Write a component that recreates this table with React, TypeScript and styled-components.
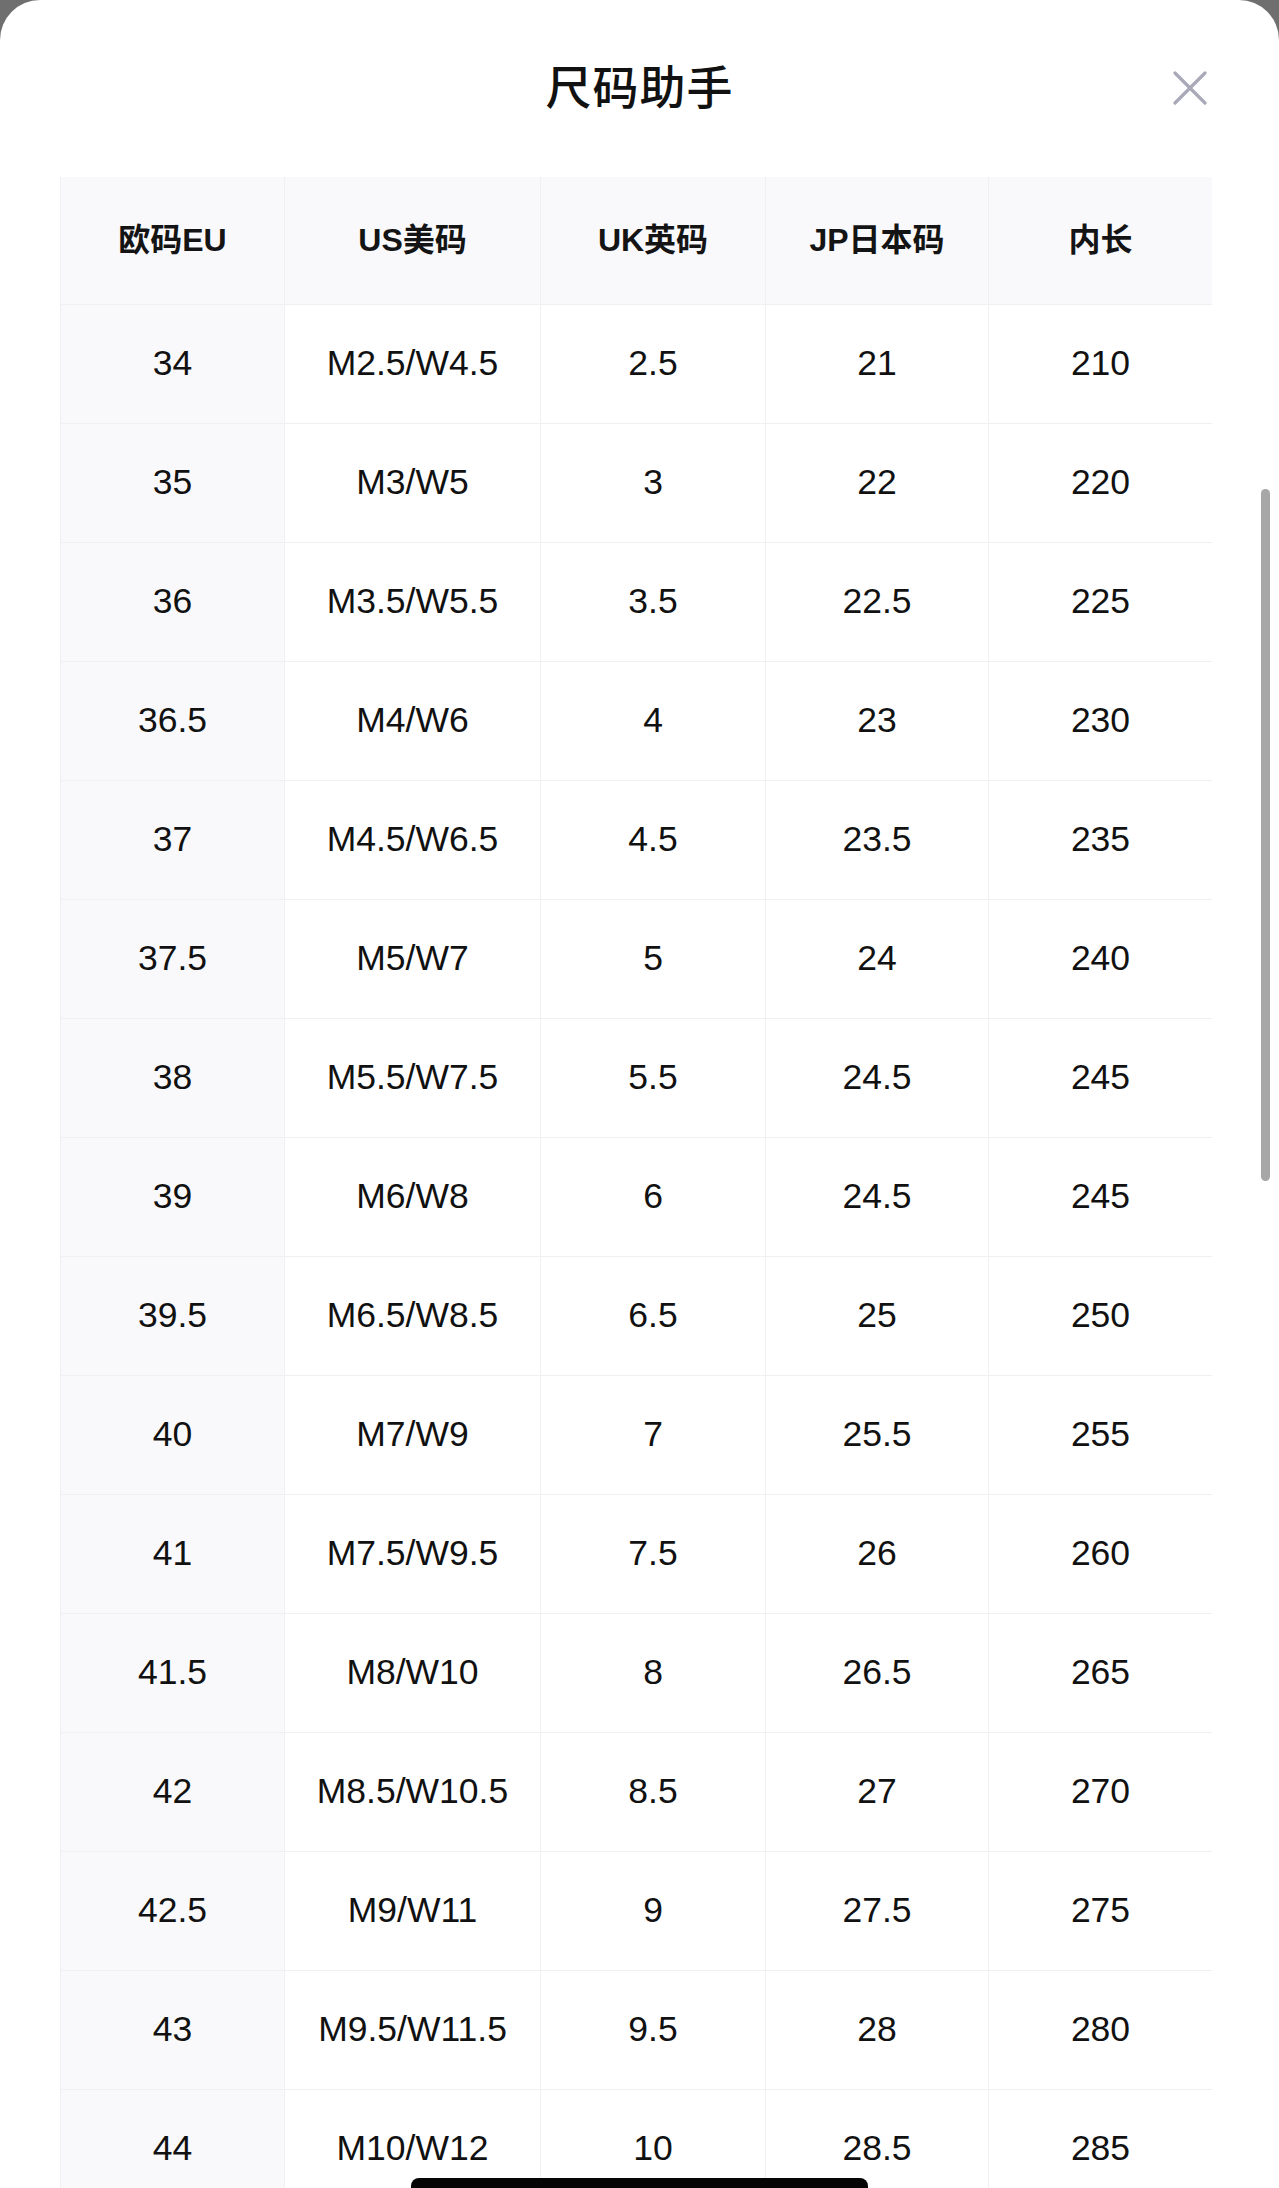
import React from "react";
import styled, { createGlobalStyle } from "styled-components";

const GlobalStyle = createGlobalStyle`
  html, body {
    margin: 0;
    padding: 0;
    background: #6f6f6f;
  }
  * {
    box-sizing: border-box;
  }
`;

const Sheet = styled.div`
  position: relative;
  width: 1279px;
  height: 2188px;
  background: #ffffff;
  border-radius: 40px 40px 0 0;
  overflow: hidden;
  font-family: "Liberation Sans", "Noto Sans CJK SC", sans-serif;
  color: #111111;
`;

// title centred, close button on the right
const TopBar = styled.div`
  height: 177px;
  display: grid;
  grid-template-columns: 1fr auto 1fr;
  align-items: center;
  padding: 0 71px 10px 71px;
`;

const Title = styled.h1`
  grid-column: 2;
  margin: 0;
  font-family: "Noto Sans CJK SC", sans-serif;
  font-size: 46px;
  font-weight: 500;
  letter-spacing: 1px;
  color: #111111;
`;

const CloseButton = styled.button`
  grid-column: 3;
  justify-self: end;
  width: 36px;
  height: 36px;
  padding: 0;
  margin-top: 8px;
  border: none;
  background: none;
  cursor: pointer;
  display: flex;
  align-items: center;
  justify-content: center;
`;

const TableWrap = styled.div`
  padding-left: 60px;
`;

const Grid = styled.div`
  display: grid;
  grid-template-columns: 224px 256px 225px 223px 223px;
  width: 1151px;
  border-left: 1px solid #f0f0f3;
  border-right: 1px solid #f0f0f3;
`;

const HeadCell = styled.div<{ last?: boolean }>`
  height: 127px;
  display: flex;
  align-items: center;
  justify-content: center;
  padding-bottom: 8px;
  background: #f9f9fb;
  border-right: ${({ last }) => (last ? "none" : "1px solid #f0f0f3")};
  font-size: 32px;
  font-weight: 700;
  color: #141414;
`;

const Cell = styled.div<{ shaded?: boolean; last?: boolean }>`
  height: 119px;
  display: flex;
  align-items: center;
  justify-content: center;
  padding-bottom: 2px;
  background: ${({ shaded }) => (shaded ? "#f9f9fb" : "#ffffff")};
  border-top: 1px solid #f0f0f3;
  border-right: ${({ last }) => (last ? "none" : "1px solid #f0f0f3")};
  font-size: 35.5px;
  font-weight: 400;
  color: #111111;
`;

const Scrollbar = styled.div`
  position: absolute;
  top: 489px;
  right: 9px;
  width: 9px;
  height: 692px;
  border-radius: 5px;
  background: #a7a7a7;
`;

const HomeIndicator = styled.div`
  position: absolute;
  bottom: -10px;
  left: 411px;
  width: 457px;
  height: 20px;
  border-radius: 8px;
  background: #050505;
`;

const headers = ["欧码EU", "US美码", "UK英码", "JP日本码", "内长"];

const rows: string[][] = [
  ["34", "M2.5/W4.5", "2.5", "21", "210"],
  ["35", "M3/W5", "3", "22", "220"],
  ["36", "M3.5/W5.5", "3.5", "22.5", "225"],
  ["36.5", "M4/W6", "4", "23", "230"],
  ["37", "M4.5/W6.5", "4.5", "23.5", "235"],
  ["37.5", "M5/W7", "5", "24", "240"],
  ["38", "M5.5/W7.5", "5.5", "24.5", "245"],
  ["39", "M6/W8", "6", "24.5", "245"],
  ["39.5", "M6.5/W8.5", "6.5", "25", "250"],
  ["40", "M7/W9", "7", "25.5", "255"],
  ["41", "M7.5/W9.5", "7.5", "26", "260"],
  ["41.5", "M8/W10", "8", "26.5", "265"],
  ["42", "M8.5/W10.5", "8.5", "27", "270"],
  ["42.5", "M9/W11", "9", "27.5", "275"],
  ["43", "M9.5/W11.5", "9.5", "28", "280"],
  ["44", "M10/W12", "10", "28.5", "285"],
];

const App: React.FC = () => {
  return (
    <>
      <GlobalStyle />
      <Sheet>
        <TopBar>
          <Title>尺码助手</Title>
          <CloseButton aria-label="关闭">
            <svg width="34" height="34" viewBox="0 0 34 34">
              <path
                d="M2 2 L32 32 M32 2 L2 32"
                stroke="#a9a9b9"
                strokeWidth="3.2"
                strokeLinecap="round"
                fill="none"
              />
            </svg>
          </CloseButton>
        </TopBar>

        <TableWrap>
          <Grid>
            {headers.map((h, i) => (
              <HeadCell key={h} last={i === headers.length - 1}>
                {h}
              </HeadCell>
            ))}
            {rows.map((row, r) =>
              row.map((v, c) => (
                <Cell key={`${r}-${c}`} shaded={c === 0} last={c === row.length - 1}>
                  {v}
                </Cell>
              ))
            )}
          </Grid>
        </TableWrap>

        <Scrollbar />
        <HomeIndicator />
      </Sheet>
    </>
  );
};

export default App;
